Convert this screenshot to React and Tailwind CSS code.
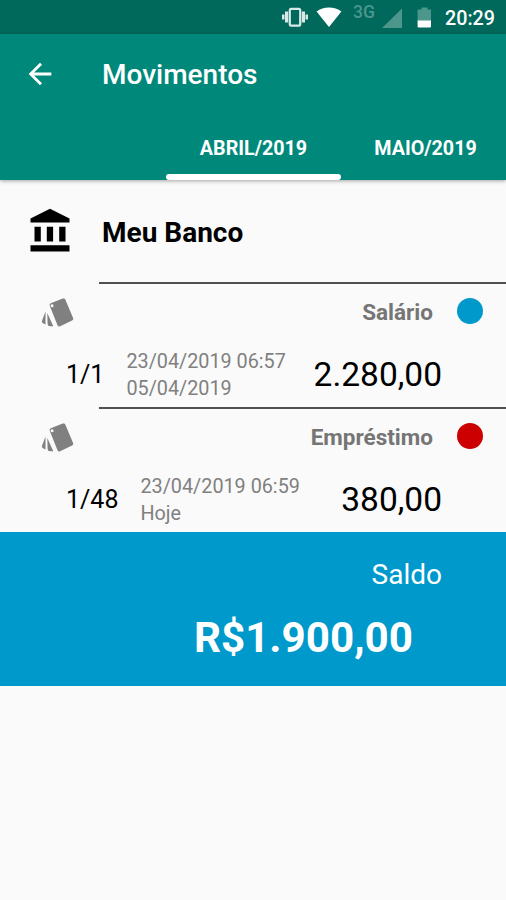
import React from 'react';
import { MdArrowBack } from 'react-icons/md';

const movements = [
  { label: 'Salário', parcel: '1/1', createdAt: '23/04/2019 06:57', dueAt: '05/04/2019', amount: '2.280,00', dot: 'bg-[#0099cc]' },
  { label: 'Empréstimo', parcel: '1/48', createdAt: '23/04/2019 06:59', dueAt: 'Hoje', amount: '380,00', dot: 'bg-[#cc0000]' },
];

const BankIcon = ({ className }) => (
  <svg className={className} viewBox="0 0 40 44" fill="currentColor">
    <path d="M20 .8 39.5 10.5v4H.5v-4z" />
    <path d="M4.5 18.8h6.3v14.7H4.5zM16.8 18.8h6.3v14.7h-6.3zM29.2 18.8h6.3v14.7h-6.3zM.5 37.3h39v6.2H.5z" />
  </svg>
);

// Tilted tag with two more fanned out behind it
const CardsIcon = ({ className }) => (
  <svg className={className} viewBox="0 0 34 34" fill="currentColor">
    <path
      fillRule="evenodd"
      d="M10.3 7 21.8 2.6q1.900-.7 2.600 1.100l7.700 18.200q.7 1.700-1 2.500l-12 5.900q-1.800.8-2.600-1L8.700 9.800q-.7-2 1.600-2.800zM11 8.200a1.500 1.500 0 1 0 .1 3 1.500 1.500 0 0 0-.1-3z"
    />
    <path d="M4.500 15.500v13L2 27.300q-1.500-.8-1-2.500zM6.300 17l6 13.300H9q-2.200 0-2.400-2.200z" />
  </svg>
);

const StatusBar = () => (
  <div className="flex h-[34px] items-center bg-[#00695c] pl-[281px] text-white">
    {/* Vibrate */}
    <svg className="h-[22px] w-[28px] shrink-0" viewBox="0 0 28 22" fill="#d9e9e7">
      <path d="M1 8.500h2.500v5H1zM4 5.500h3.200v11H4zM24.500 8.500H27v5h-2.500zM20.800 5.500H24v11h-3.200z" />
      <rect x="8.8" y="2.9" width="10.4" height="16.8" rx="1.4" fill="none" stroke="#d9e9e7" strokeWidth="2.2" />
    </svg>
    {/* Wifi */}
    <svg className="ml-[7px] h-[22px] w-[26px] shrink-0" viewBox="0 0 26 22" fill="#ffffff">
      <path d="M.6 5.4C4 2.9 8.3 1.5 13 1.5s9 1.4 12.400 3.900L13 21z" />
    </svg>
    <span className="mb-[8px] ml-[11px] w-[24px] text-[17.5px] leading-none font-medium text-[#4d968c]">3G</span>
    <svg className="ml-[4px] h-[22px] w-[22px] shrink-0" viewBox="0 0 22 22" fill="#4d968c">
      <path d="M21 2.500v19.400H1z" />
    </svg>
    {/* Battery */}
    <svg className="ml-[14px] h-[22px] w-[15px] shrink-0" viewBox="0 0 15 22">
      <path d="M4.500 1.500h6v2H14v11.500H.6V3.500h3.900z" fill="#4d968c" />
      <path d="M.6 14.600H14v6q0 1-1 1H1.600q-1 0-1-1z" fill="#ffffff" />
    </svg>
    <span className="mt-[4px] ml-[13px] text-[19.7px] leading-none font-medium">20:29</span>
  </div>
);

const AppBar = () => (
  <header className="relative bg-[#00897b] text-white shadow-[0_1px_4px_rgba(0,0,0,0.35)]">
    <div className="flex h-[79px] items-center pl-[23px]">
      <MdArrowBack className="size-[34px]" />
      <h1 className="mt-[3px] ml-[45px] text-[28px] leading-none font-medium">Movimentos</h1>
    </div>
    <nav className="flex h-[67px] overflow-hidden pl-[166px] text-[19.7px] font-bold">
      <div className="flex w-[175px] shrink-0 flex-col items-center">
        <span className="flex h-[61px] items-center pt-[10px]">ABRIL/2019</span>
        <span className="h-[6px] w-full rounded-[3px] bg-white" />
      </div>
      <div className="flex w-[169px] shrink-0 flex-col items-center">
        <span className="flex h-[61px] items-center pt-[10px]">MAIO/2019</span>
      </div>
    </nav>
  </header>
);

const Movement = ({ item }) => (
  <li className="flex h-[125px] flex-col">
    <div className="ml-[99px] h-[1.5px] shrink-0 bg-[#505050]" />
    <div className="flex h-[58px] items-center pr-[23px] pb-[3px] pl-[41px]">
      <CardsIcon className="mt-[3px] size-[34px] text-[#808080]" />
      <span className="mt-[2px] ml-auto text-[22.5px] leading-none font-bold text-[#757575]">{item.label}</span>
      <span className={`ml-[24px] size-[26px] rounded-full ${item.dot}`} />
    </div>
    <div className="flex h-[65px] items-center pt-[1px] pr-[64px] pl-[66px]">
      <span className="text-[25px] leading-none text-black">{item.parcel}</span>
      <div className="mt-[2px] ml-[22px] text-[19.8px] leading-[26.5px] text-[#808080]">
        <p>{item.createdAt}</p>
        <p>{item.dueAt}</p>
      </div>
      <span className="ml-auto text-[33.5px] leading-none text-black">{item.amount}</span>
    </div>
  </li>
);

const App = () => {
  return (
    <div className="h-[900px] w-[506px] overflow-hidden bg-[#fafafa] font-['Roboto',sans-serif] whitespace-nowrap">
      <StatusBar />
      <AppBar />

      {/* Account */}
      <div className="flex h-[102px] items-center pl-[30px]">
        <BankIcon className="mb-[2px] h-[44px] w-[40px] text-black" />
        <h2 className="mt-[3px] ml-[32px] text-[28px] leading-none font-bold text-black">Meu Banco</h2>
      </div>

      <ul>
        {movements.map(item => <Movement key={item.label} item={item} />)}
      </ul>

      {/* Balance */}
      <div className="flex h-[154px] flex-col items-end bg-[#0099cc] text-white">
        <p className="mt-[29px] mr-[64px] text-[28px] leading-none">Saldo</p>
        <p className="mt-[28px] mr-[93px] text-[42.2px] leading-none font-bold">R$1.900,00</p>
      </div>
    </div>
  );
};

export default App;
